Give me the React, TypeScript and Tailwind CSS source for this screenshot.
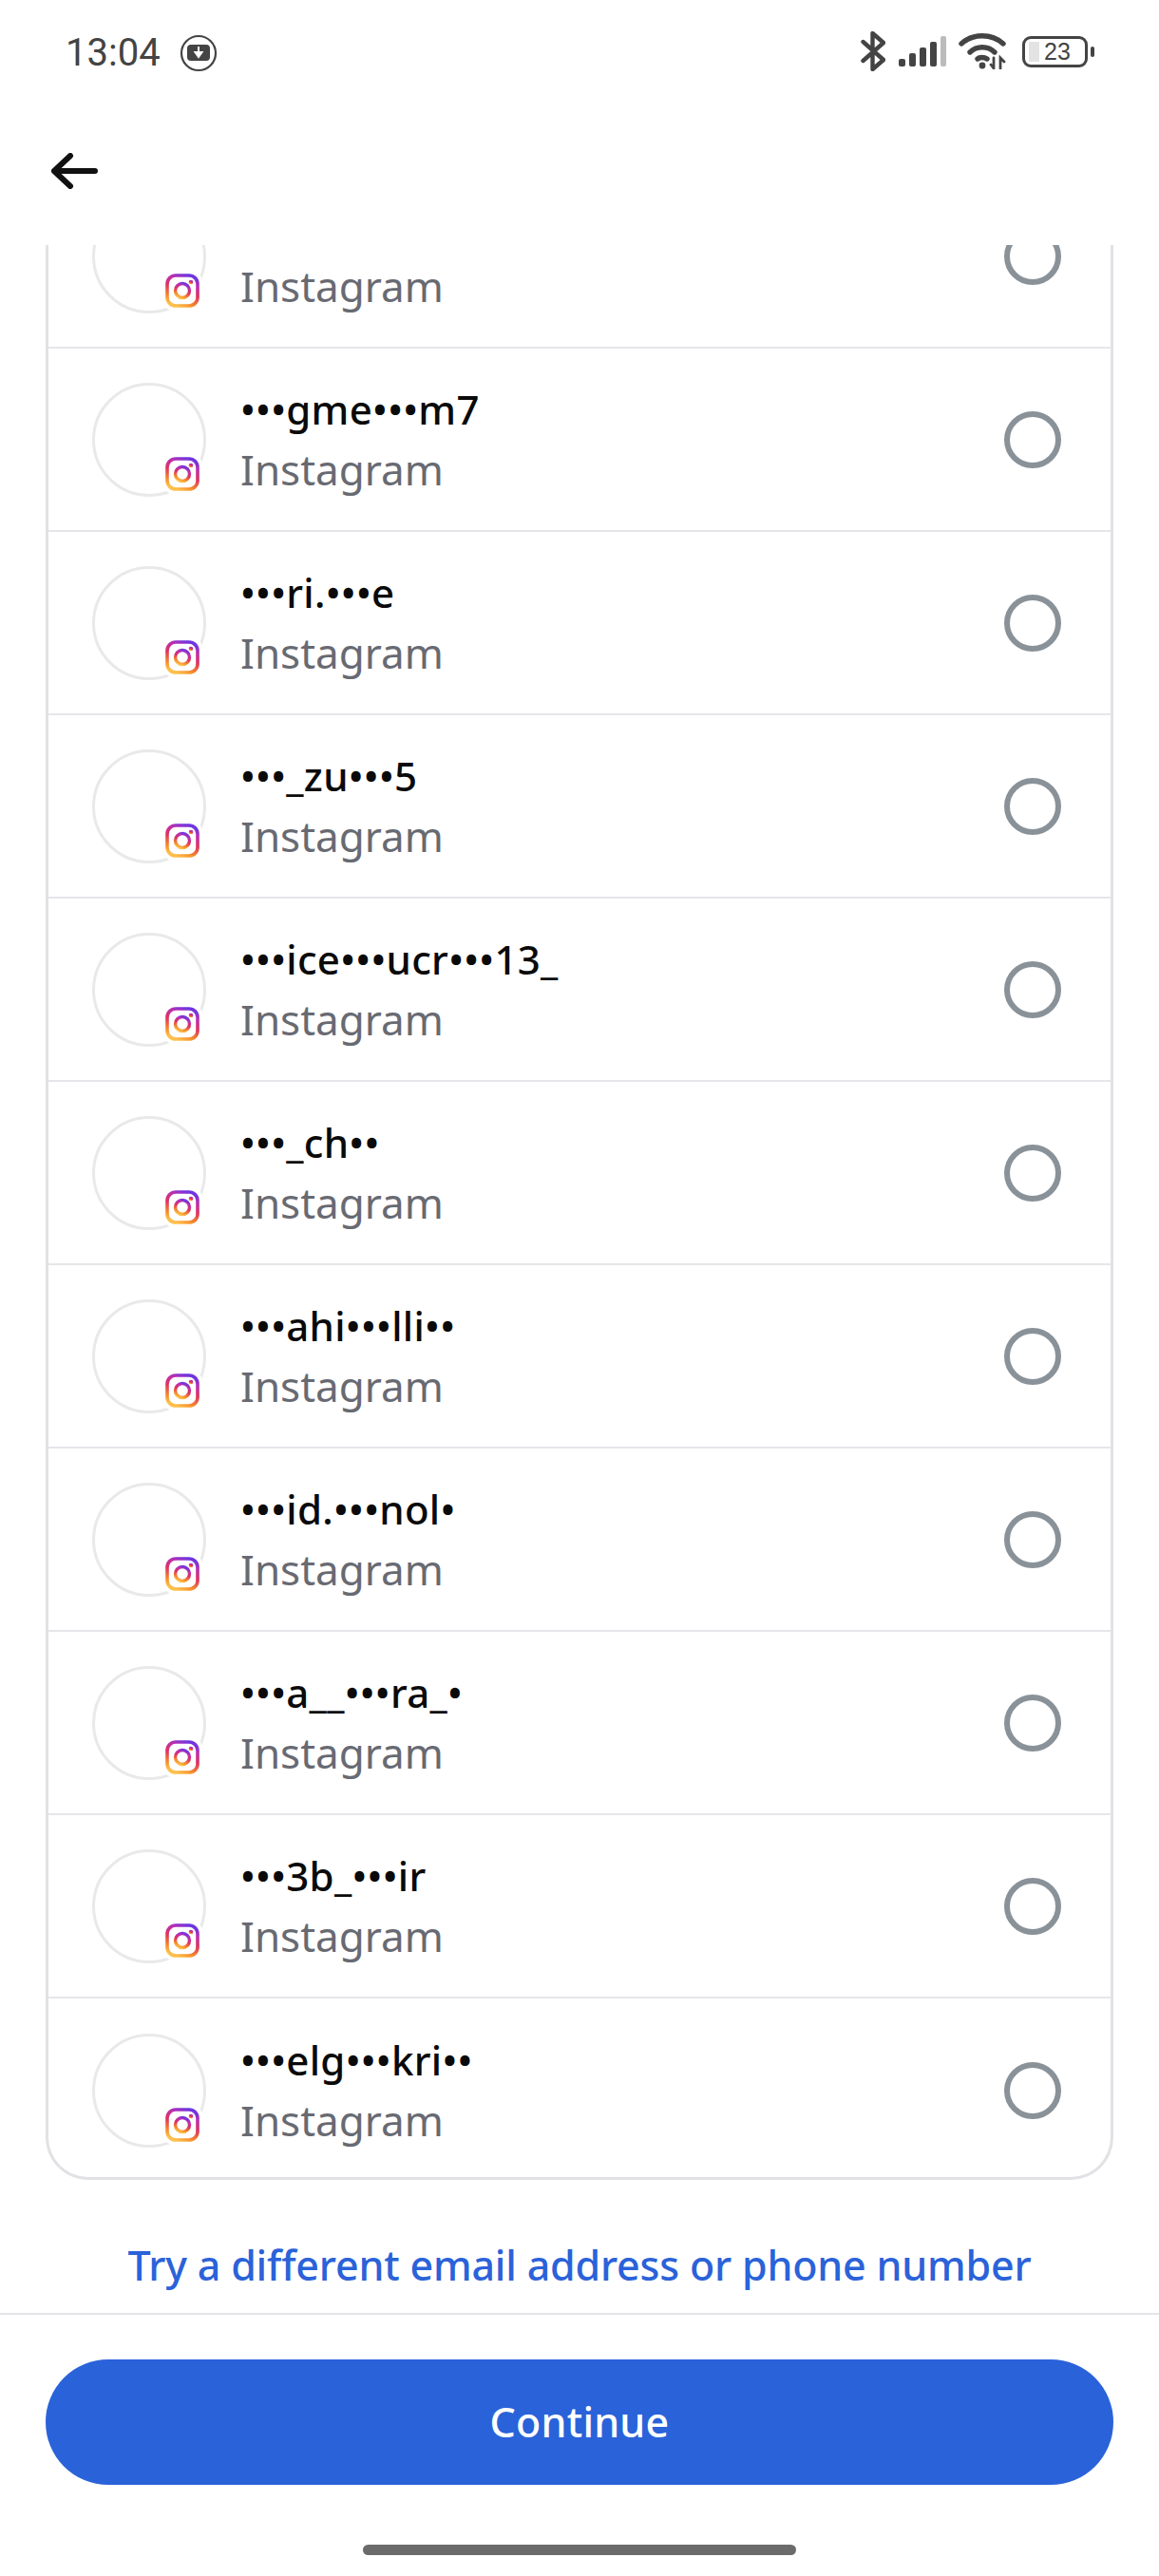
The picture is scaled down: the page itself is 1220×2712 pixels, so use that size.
import React from "react";

const names = ["", "•••gme•••m7", "•••ri.•••e", "•••_zu•••5", "•••ice•••ucr•••13_", "•••_ch••", "•••ahi•••lli••", "•••id.•••nol•", "•••a__•••ra_•", "•••3b_•••ir", "•••elg•••kri••"];

function InstagramIcon({ id }: { id: string }) {
  return (
    <svg viewBox="0 0 36 36" className="h-full w-full">
      <defs>
        <linearGradient id={id} x1="0.3" y1="1" x2="0.7" y2="0">
          <stop offset="0" stopColor="#fdc04a" />
          <stop offset="0.2" stopColor="#f58a2c" />
          <stop offset="0.5" stopColor="#e0325f" />
          <stop offset="0.8" stopColor="#b92fb2" />
          <stop offset="1" stopColor="#6f35e0" />
        </linearGradient>
      </defs>
      <rect x="2" y="2" width="32" height="32" rx="9" fill="none" stroke={`url(#${id})`} strokeWidth="3.6" />
      <circle cx="18" cy="18" r="7.5" fill="none" stroke={`url(#${id})`} strokeWidth="3.4" />
      <circle cx="27" cy="9" r="2.3" fill={`url(#${id})`} />
    </svg>
  );
}

function Row({ name, index, last }: { name: string; index: number; last: boolean }) {
  return (
    <div className={`flex h-[193px] items-center pl-[46px] pr-[52px] ${last ? "-mb-[5px]" : "border-b-2 border-[#e6e6ea]"}`}>
      <div className="relative h-[120px] w-[120px] shrink-0 rounded-full border-[3px] border-[#e9e9e9]">
        <div className="absolute left-[71px] top-[72px] h-[42px] w-[42px] rounded-[12px] bg-white p-[3px]">
          <InstagramIcon id={`ig${index}`} />
        </div>
      </div>
      <div className="ml-[36px] flex min-w-0 flex-1 flex-col">
        <div className="h-[60px] text-[42px] font-medium leading-[60px] tracking-[0.3px] text-[#0a0a0a]">{name}</div>
        <div className="mt-[3px] h-[60px] text-[44px] leading-[60px] text-[#686a72]">Instagram</div>
      </div>
      <div className="h-[60px] w-[60px] shrink-0 rounded-full border-[6px] border-[#8a9299]" />
    </div>
  );
}

function StatusIcons() {
  return (
    <div className="flex items-center pt-[2px]">
      <svg viewBox="0 0 26 42" className="h-[42px] w-[26px]" fill="none" stroke="#444" strokeWidth="4.4" strokeLinecap="round" strokeLinejoin="round">
        <path d="M2.5 11 L24 30 L12.5 40 V2 L24 12 L2.5 31" />
      </svg>
      <svg viewBox="0 0 50 32" className="ml-[14px] h-[32px] w-[50px]">
        <rect x="0" y="24" width="7" height="8" rx="2" fill="#444" />
        <rect x="11" y="18" width="7" height="14" rx="2" fill="#444" />
        <rect x="22" y="12" width="7" height="20" rx="2" fill="#444" />
        <rect x="33" y="6" width="7" height="26" rx="2" fill="#444" />
        <rect x="44" y="0" width="6" height="32" rx="2" fill="#bbb" />
      </svg>
      <svg viewBox="0 0 50 38" className="ml-[13px] h-[38px] w-[50px]" fill="none" stroke="#444" strokeWidth="5.4" strokeLinecap="round">
        <path d="M3 11 C15 0 35 0 47 11" />
        <path d="M12 20 C19 13 31 13 38 20" />
        <path d="M20 27 C22 25 27 25 30 27" />
        <circle cx="25" cy="34" r="3.4" fill="#444" stroke="none" />
        <path d="M37 26 V37 M34 33 L37 37 M44 37 V26 L48 30" strokeWidth="2.8" />
      </svg>
      <div className="ml-[17px] flex items-center">
        <div className="relative flex h-[33px] w-[69px] items-center justify-center rounded-[9px] border-[3px] border-[#444] text-[25px] leading-none text-[#444] [font-family:'Liberation_Sans',sans-serif]">
          <div className="absolute bottom-[3px] left-[4px] top-[3px] w-[11px] bg-[#e3e3e3]" />
          <span className="relative ml-[5px]">23</span>
        </div>
        <div className="ml-[3px] h-[11px] w-[4px] rounded-full bg-[#444]" />
      </div>
    </div>
  );
}

export default function App() {
  return (
    <div className="flex h-[2712px] w-[1220px] flex-col overflow-hidden bg-white [font-family:'Noto_Sans',sans-serif]">
      <div className="flex h-[108px] shrink-0 items-start justify-between pl-[69px] pr-[68px] pt-[31px]">
        <div className="flex items-center">
          <span className="text-[40px] font-[450] leading-[50px] text-[#444] [font-family:Roboto,sans-serif]">13:04</span>
          <svg viewBox="0 0 40 40" className="ml-[20px] h-[40px] w-[40px]">
            <circle cx="20" cy="20" r="18" fill="none" stroke="#444" strokeWidth="2.2" />
            <rect x="8" y="11" width="24" height="17" rx="4" fill="#444" />
            <path d="M20 13 V18 M16.5 19 H23.5 L20 24 Z" stroke="#fff" strokeWidth="2" fill="#fff" />
          </svg>
        </div>
        <StatusIcons />
      </div>
      <div className="flex h-[150px] shrink-0 items-start pl-[53px] pt-[53px]">
        <svg viewBox="0 0 50 38" className="h-[38px] w-[50px]" fill="none" stroke="#111" strokeWidth="6" strokeLinecap="round" strokeLinejoin="round">
          <path d="M4 19 H47 M21 3 L4 19 L21 35" />
        </svg>
      </div>
      <div className="h-[2037px] shrink-0 overflow-hidden px-[48px]">
        <div className="-mt-[84px] rounded-b-[45px] border-[3px] border-t-0 border-[#e2e2e6]">
          {names.map((n, i) => (
            <Row key={i} name={n} index={i} last={i === names.length - 1} />
          ))}
        </div>
      </div>
      <div className="flex h-[140px] shrink-0 items-start justify-center pt-[60px]">
        <div className="text-[43px] font-medium leading-[60px] tracking-[-0.2px] text-[#2b62d9]">Try a different email address or phone number</div>
      </div>
      <div className="flex flex-1 flex-col items-center border-t-2 border-[#e4e4e8]">
        <div className="mt-[47px] flex h-[132px] w-[1124px] items-center justify-center rounded-full bg-[#2a62d9] text-[43px] font-medium tracking-[0.2px] text-white">Continue</div>
        <div className="mt-[63px] h-[11px] w-[456px] rounded-full bg-[#6b6b6b]" />
      </div>
    </div>
  );
}
